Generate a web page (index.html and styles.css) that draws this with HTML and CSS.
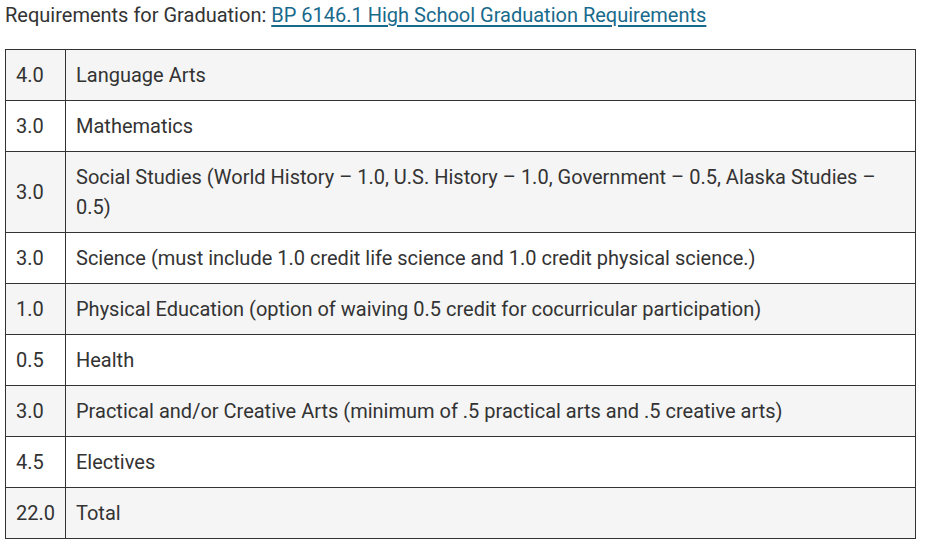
FILE: index.html
```html
<!DOCTYPE html>
<html>
<head>
<meta charset="utf-8">
<link rel="stylesheet" href="styles.css">
</head>
<body>
<div class="page">
<p class="intro">Requirements for Graduation: <a href="#">BP 6146.1 High School Graduation Requirements</a></p>
<table class="req">
<tbody>
<tr><td class="num">4.0</td><td>Language Arts</td></tr>
<tr><td class="num">3.0</td><td>Mathematics</td></tr>
<tr><td class="num">3.0</td><td>Social Studies (World History – 1.0, U.S. History – 1.0, Government – 0.5, Alaska Studies – 0.5)</td></tr>
<tr><td class="num">3.0</td><td>Science (must include 1.0 credit life science and 1.0 credit physical science.)</td></tr>
<tr><td class="num">1.0</td><td>Physical Education (option of waiving 0.5 credit for cocurricular participation)</td></tr>
<tr><td class="num">0.5</td><td>Health</td></tr>
<tr><td class="num">3.0</td><td>Practical and/or Creative Arts (minimum of .5 practical arts and .5 creative arts)</td></tr>
<tr><td class="num">4.5</td><td>Electives</td></tr>
<tr><td class="num">22.0</td><td>Total</td></tr>
</tbody>
</table>
</div>
</body>
</html>
```
FILE: styles.css
```css
html, body {
  margin: 0;
  padding: 0;
  background: #fff;
}
.page {
  padding: 0 9px 0 5px;
  font-family: Roboto, "Liberation Sans", sans-serif;
  font-size: 20px;
  line-height: 30px;
  color: #333;
}
.intro {
  margin: 0 0 19px 0;
}
.intro a {
  color: #186a8c;
  text-decoration: underline;
  text-decoration-thickness: 2px;
  text-underline-offset: 3px;
}
.req {
  width: 911px;
  border-collapse: collapse;
  border: 1px solid #333;
}
.req td {
  border: 1px solid #333;
  padding: 10px 10px;
  vertical-align: middle;
  text-align: left;
}
.req td.num {
  width: 39px;
  white-space: nowrap;
}
.req tr:nth-child(odd) td {
  background: #f5f5f5;
}
```
